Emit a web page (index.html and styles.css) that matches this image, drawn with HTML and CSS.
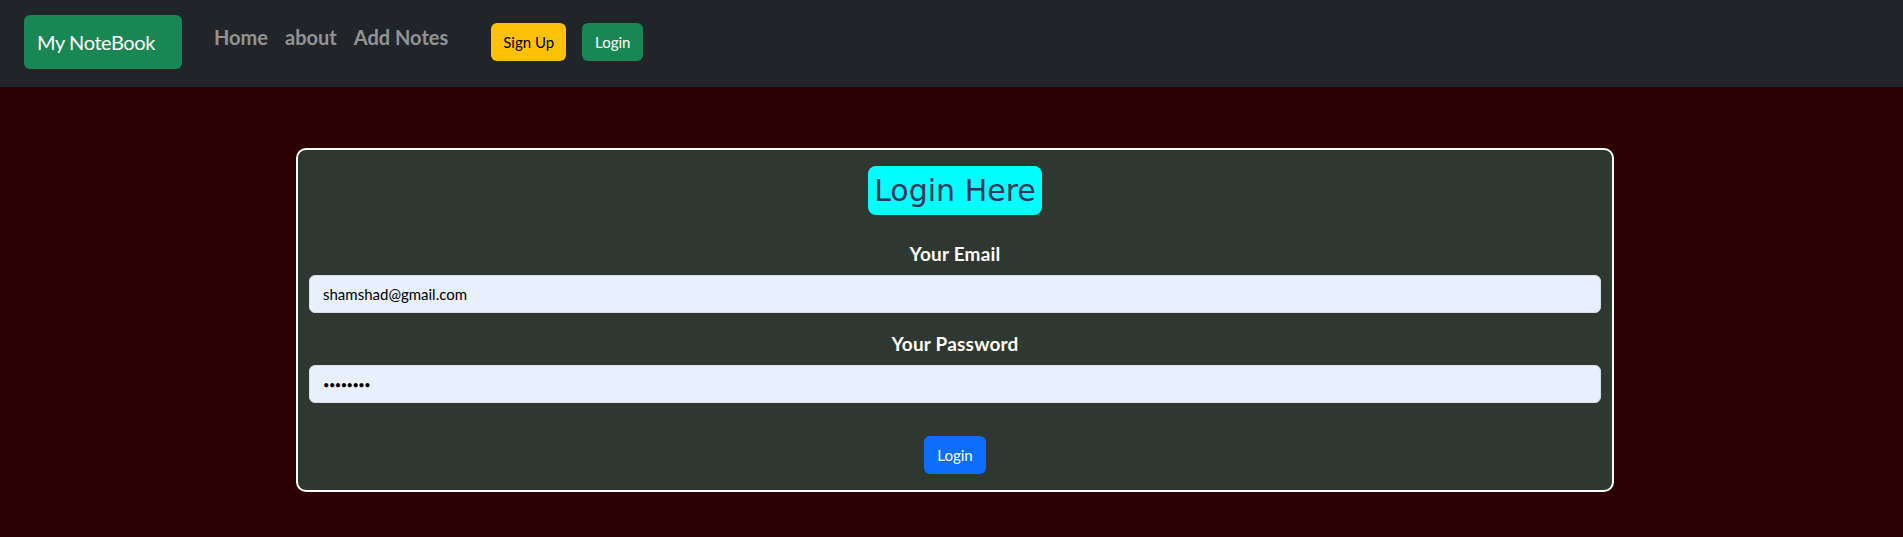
FILE: index.html
```html
<!DOCTYPE html>
<html lang="en">
<head>
<meta charset="utf-8">
<title>My NoteBook - Login</title>
<link rel="stylesheet" href="styles.css">
</head>
<body>
  <nav class="navbar">
    <a class="brand" href="#">My NoteBook</a>
    <ul class="nav-links">
      <li><a href="#">Home</a></li>
      <li><a href="#">about</a></li>
      <li><a href="#">Add Notes</a></li>
    </ul>
    <div class="nav-actions">
      <a class="btn btn-warning" href="#">Sign Up</a>
      <a class="btn btn-success" href="#">Login</a>
    </div>
  </nav>

  <main class="page">
    <form class="login-card">
      <h2 class="login-title">Login Here</h2>
      <label class="field-label" for="email">Your Email</label>
      <input class="field-input" id="email" type="email" value="shamshad@gmail.com">
      <label class="field-label field-label-second" for="password">Your Password</label>
      <input class="field-input field-password" id="password" type="password" value="12345678">
      <div class="submit-row">
        <button class="btn btn-primary" type="button">Login</button>
      </div>
    </form>
  </main>
</body>
</html>
```

FILE: styles.css
```css
* {
  box-sizing: border-box;
}

html, body {
  margin: 0;
  padding: 0;
}

body {
  background: #2c0204;
  font-family: Lato, "Open Sans", "Liberation Sans", sans-serif;
  min-height: 537px;
}

a {
  text-decoration: none;
}

.navbar {
  height: 87px;
  background: #212529;
  display: flex;
  align-items: flex-start;
  padding: 15px 0 0 24px;
}

.brand {
  display: flex;
  align-items: center;
  width: 158px;
  height: 54px;
  padding-left: 13px;
  background: #198754;
  color: #ffffff;
  border-radius: 6px;
  font-size: 20px;
  letter-spacing: -0.4px;
}

.nav-links {
  list-style: none;
  display: flex;
  gap: 17px;
  margin: 7px 0 0 32px;
  padding: 0;
}

.nav-links a {
  display: block;
  color: rgba(255, 255, 255, 0.52);
  font-weight: 700;
  font-size: 20px;
  line-height: 30px;
}

.nav-actions {
  display: flex;
  gap: 16px;
  margin: 8px 0 0 43px;
}

.btn {
  display: inline-flex;
  align-items: center;
  justify-content: center;
  height: 38px;
  padding: 0 12px;
  border: none;
  border-radius: 6px;
  font-family: Lato, "Open Sans", "Liberation Sans", sans-serif;
  font-size: 15px;
  cursor: pointer;
}

.btn-warning {
  background: #ffc107;
  color: #000000;
  width: 75px;
}

.btn-success {
  background: #198754;
  color: #ffffff;
  width: 61px;
}

.btn-primary {
  background: #0d6efd;
  color: #ffffff;
  width: 62px;
}

.page {
  padding-top: 61px;
}

.login-card {
  width: 1318px;
  margin: 0 0 0 296px;
  border: 2px solid #ffffff;
  border-radius: 10px;
  background: #2f3830;
  padding: 16px 11px 16px;
  display: flex;
  flex-direction: column;
  align-items: center;
}

.login-title {
  margin: 0;
  background: #00ffff;
  color: #2f3656;
  font-family: "DejaVu Sans", "Liberation Sans", sans-serif;
  font-weight: 400;
  font-size: 30px;
  line-height: 49px;
  height: 49px;
  padding: 0 6px;
  border-radius: 8px;
}

.field-label {
  display: block;
  color: #ffffff;
  font-weight: 700;
  font-size: 19px;
  letter-spacing: 0.2px;
  line-height: 27px;
  margin: 25px 0 8px;
}

.field-label-second {
  margin-top: 17px;
}

.field-input {
  display: block;
  width: 100%;
  height: 38px;
  padding: 6px 13px;
  border: 1px solid #d9dee6;
  border-radius: 6px;
  background: #e8f0fe;
  color: #000000;
  font-family: Lato, "Open Sans", "Liberation Sans", sans-serif;
  font-size: 15px;
  outline: none;
}

.field-password {
  font-size: 11px;
  letter-spacing: -0.5px;
}

.submit-row {
  margin-top: 33px;
  display: flex;
  justify-content: center;
}
```
